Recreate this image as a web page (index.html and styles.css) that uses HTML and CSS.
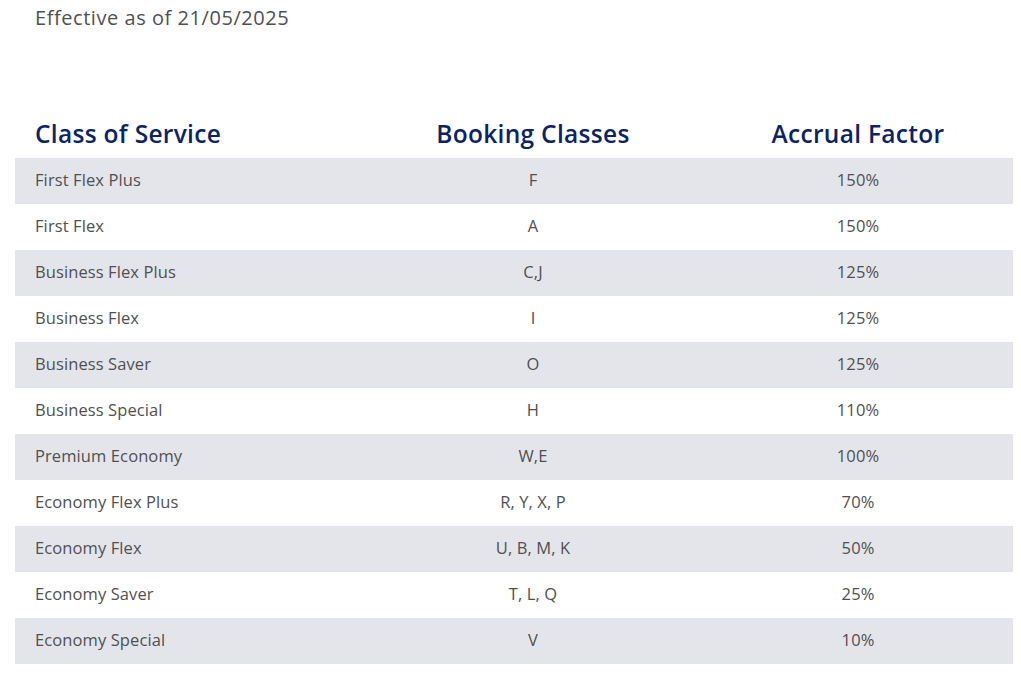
FILE: index.html
```html
<!DOCTYPE html>
<html>
<head>
<meta charset="utf-8">
<link rel="stylesheet" href="styles.css">
</head>
<body>
<div class="page">
  <p class="effective">Effective as of 21/05/2025</p>
  <div class="table">
    <div class="row head">
      <div class="c1">Class of Service</div>
      <div class="c2">Booking Classes</div>
      <div class="c3">Accrual Factor</div>
    </div>
    <div class="row"><div class="c1">First Flex Plus</div><div class="c2">F</div><div class="c3">150%</div></div>
    <div class="row"><div class="c1">First Flex</div><div class="c2">A</div><div class="c3">150%</div></div>
    <div class="row"><div class="c1">Business Flex Plus</div><div class="c2">C,J</div><div class="c3">125%</div></div>
    <div class="row"><div class="c1">Business Flex</div><div class="c2">I</div><div class="c3">125%</div></div>
    <div class="row"><div class="c1">Business Saver</div><div class="c2">O</div><div class="c3">125%</div></div>
    <div class="row"><div class="c1">Business Special</div><div class="c2">H</div><div class="c3">110%</div></div>
    <div class="row"><div class="c1">Premium Economy</div><div class="c2">W,E</div><div class="c3">100%</div></div>
    <div class="row"><div class="c1">Economy Flex Plus</div><div class="c2">R, Y, X, P</div><div class="c3">70%</div></div>
    <div class="row"><div class="c1">Economy Flex</div><div class="c2">U, B, M, K</div><div class="c3">50%</div></div>
    <div class="row"><div class="c1">Economy Saver</div><div class="c2">T, L, Q</div><div class="c3">25%</div></div>
    <div class="row"><div class="c1">Economy Special</div><div class="c2">V</div><div class="c3">10%</div></div>
  </div>
</div>
</body>
</html>
```

FILE: styles.css
```css
* { box-sizing: border-box; }
html, body { margin: 0; padding: 0; background: #fff; }
body { font-family: "Open Sans", "Noto Sans", sans-serif; color: #505053; }
.page { padding: 0 8px 0 15px; }
.effective {
  margin: 0;
  padding: 4px 0 0 20px;
  height: 112px;
  font-size: 20px;
  line-height: 28px;
  letter-spacing: 0.55px;
  color: #505053;
}
.table { display: flex; flex-direction: column; width: 998px; }
.row {
  display: grid;
  grid-template-columns: 348px 340px 310px;
  height: 46px;
  align-items: center;
  font-size: 16.5px;
  letter-spacing: 0.1px;
  padding-bottom: 3px;
}
.row:nth-child(even) { background: #e4e5ea; }
.row .c1 { padding-left: 20px; }
.row .c2, .row .c3 { text-align: center; }
.head {
  font-size: 24.5px;
  font-weight: 600;
  color: #0c2461;
  letter-spacing: 0.3px;
  padding-bottom: 3px;
}
```
